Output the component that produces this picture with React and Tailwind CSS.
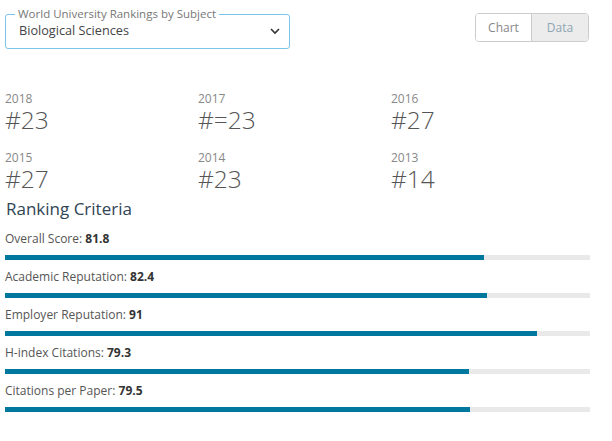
const years = [
  { year: "2018", rank: "#23" },
  { year: "2017", rank: "#=23" },
  { year: "2016", rank: "#27" },
  { year: "2015", rank: "#27" },
  { year: "2014", rank: "#23" },
  { year: "2013", rank: "#14" },
];

const criteria = [
  { label: "Overall Score", score: 81.8 },
  { label: "Academic Reputation", score: 82.4 },
  { label: "Employer Reputation", score: 91 },
  { label: "H-index Citations", score: 79.3 },
  { label: "Citations per Paper", score: 79.5 },
];

export default function App() {
  return (
    <div className="w-[612px] h-[441px] bg-white font-['Open_Sans',sans-serif] overflow-hidden">
      <div className="w-[585px] ml-[5px]">
        <div className="flex justify-between items-start pt-[7px]">
          <fieldset className="w-[285px] h-[42px] border border-[#7cc4ea] rounded-[3px] px-[9px]">
            <legend className="px-[3px] text-[11.5px] leading-[14px] text-[#777]">
              World University Rankings by Subject
            </legend>
            <div className="flex items-center justify-between pl-[4px] pr-[1px] h-[20px]">
              <span className="text-[12.7px] text-[#444]">Biological Sciences</span>
              <svg width="10" height="7" viewBox="0 0 10 7" className="mr-[-1px]">
                <polyline points="1,1 5,5 9,1" fill="none" stroke="#333" strokeWidth="1.6" />
              </svg>
            </div>
          </fieldset>
          <div className="flex mt-[6px] mr-[1px] border border-[#ccc] rounded-[4px] overflow-hidden text-[12px] h-[29px]">
            <button className="w-[56px] bg-white text-[#888] border-r border-[#ccc]">Chart</button>
            <button className="w-[56px] bg-[#ececec] text-[#8ea5b2]">Data</button>
          </div>
        </div>

        <div className="grid grid-cols-[193px_193px_193px] gap-y-[18px] mt-[43px]">
          {years.map((y) => (
            <div key={y.year}>
              <div className="text-[12px] leading-[14px] text-[#888]">{y.year}</div>
              <div className="text-[24.5px] leading-[27px] font-light text-[#555]">{y.rank}</div>
            </div>
          ))}
        </div>

        <h2 className="mt-[5px] text-[17px] leading-[24px] font-medium text-[#2f4454] pl-[1px]">
          Ranking Criteria
        </h2>

        <div className="flex flex-col gap-[9px] mt-[10px]">
          {criteria.map((c) => (
            <div key={c.label}>
              <div className="text-[12px] leading-[16px] text-[#555]">
                {c.label}: <span className="font-bold text-[#333]">{c.score}</span>
              </div>
              <div className="mt-[8px] h-[5px] bg-[#e9e9e9]">
                <div className="h-full bg-[#00789d]" style={{ width: `${c.score}%` }} />
              </div>
            </div>
          ))}
        </div>
      </div>
    </div>
  );
}
